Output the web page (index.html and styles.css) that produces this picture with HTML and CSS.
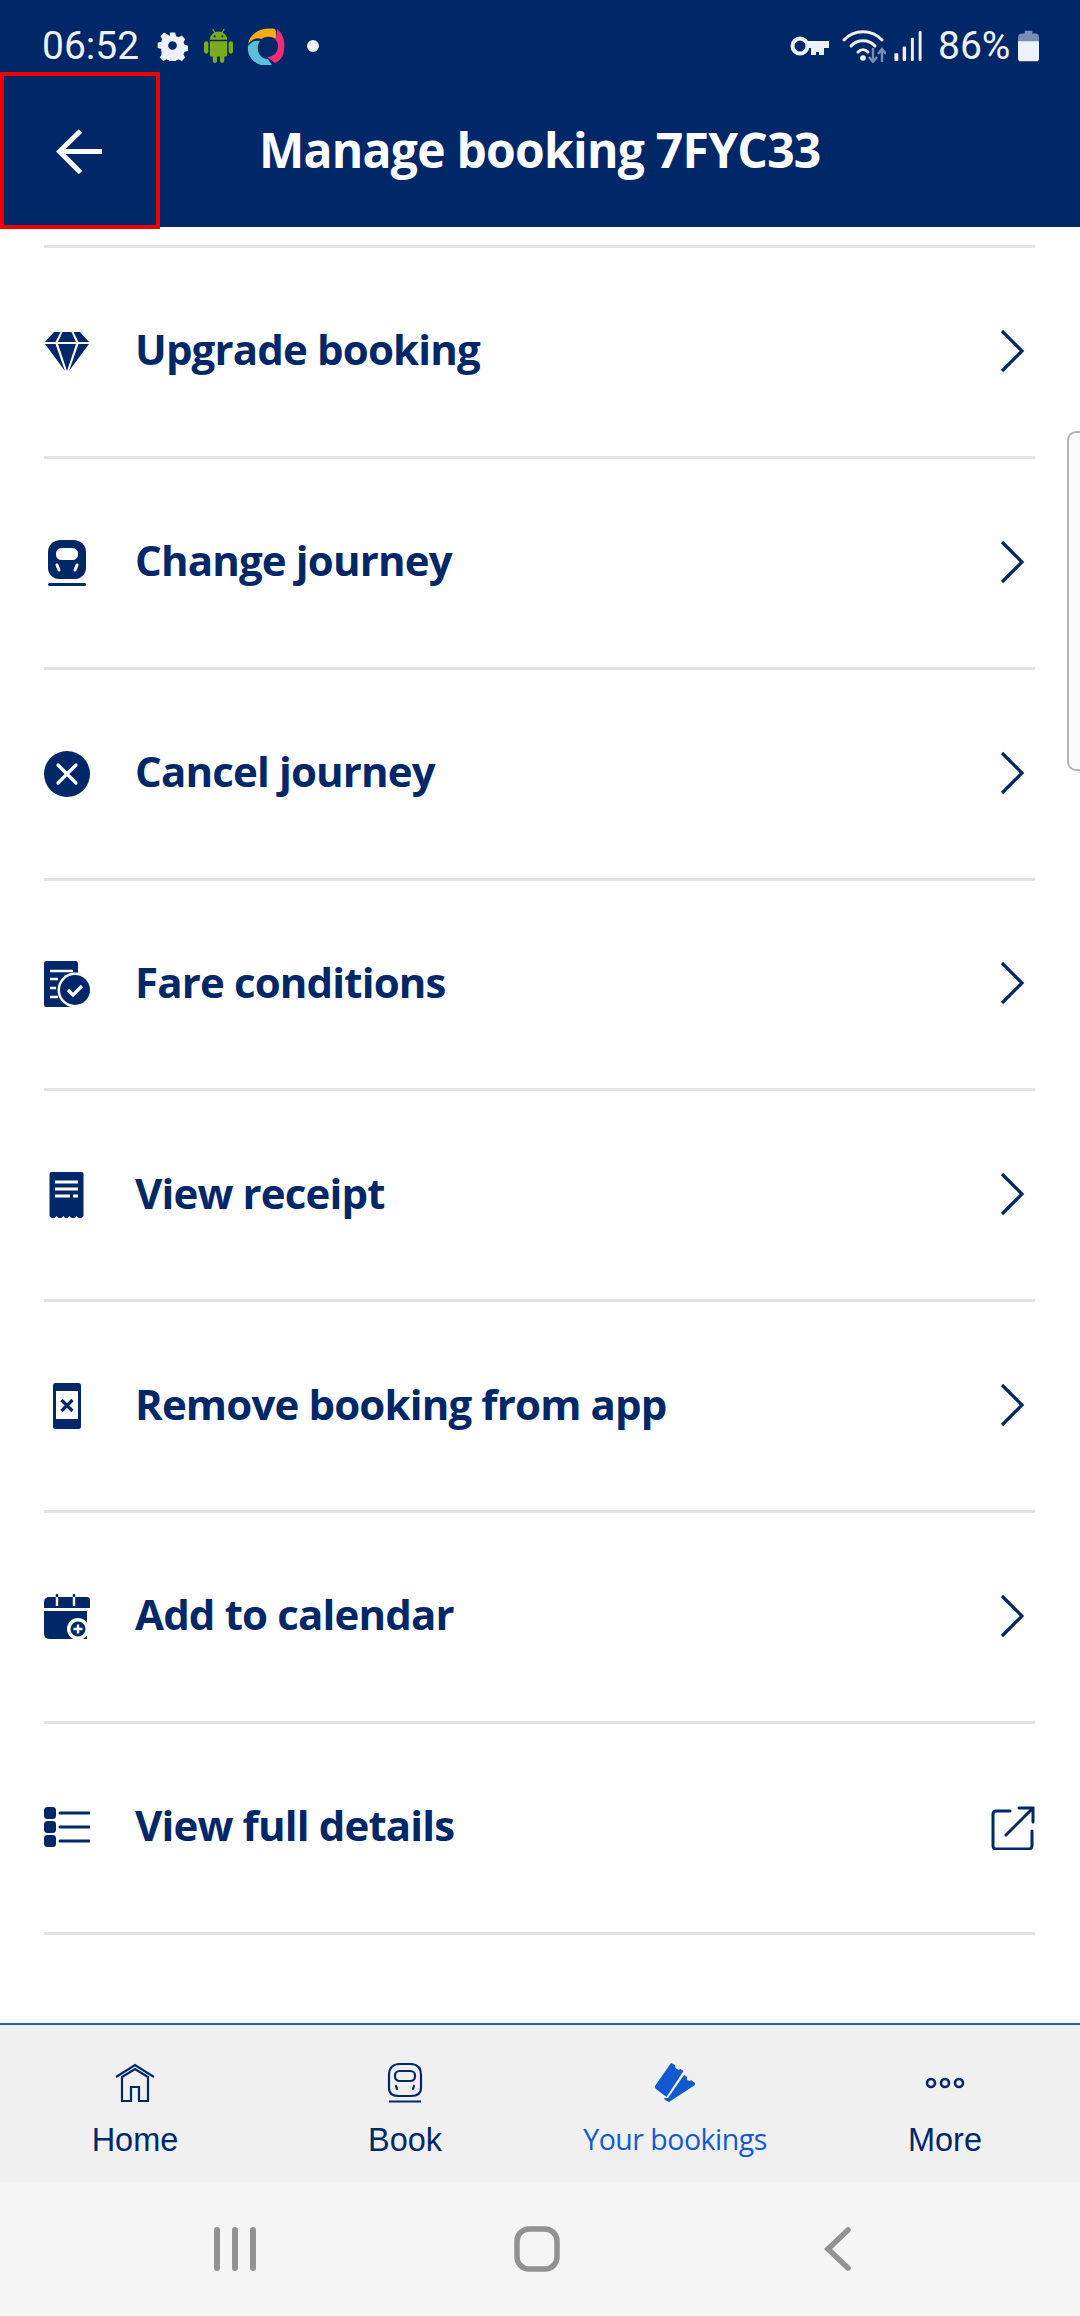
FILE: index.html
```html
<!DOCTYPE html>
<html lang="en">
<head>
<meta charset="utf-8">
<title>Manage booking 7FYC33</title>
<link rel="stylesheet" href="styles.css">
</head>
<body>
<div class="screen">
  <header class="header">
    <div class="status">
      <span class="time">06:52</span>
      <svg class="st-gear" viewBox="0 0 32 32"><path fill="#eef1f7" fill-rule="evenodd" d="M13 1h6l1 4 3 1.400 3.600-2 4 4.300-2 3.500 1.200 3 4 1v6l-4 1-1.200 3 2 3.500-4 4.200-3.600-2-3 1.200-1 4h-6l-1-4-3-1.200-3.600 2-4-4.200 2-3.500L3 19.800l-4-1v-6l4-1 1.200-3-2-3.500 4-4.300 3.600 2L13 5zM16 11a5 5 0 1 0 0 10 5 5 0 0 0 0-10z" transform="translate(1.600 1.600) scale(.9)"/></svg>
      <svg class="st-android" viewBox="0 0 30 36"><g fill="#7cab1f"><path d="M6 12a9 8.500 0 0 1 18 0z"/><path d="M6 13.500h18v14a2 2 0 0 1-2 2H8a2 2 0 0 1-2-2z"/><rect x="0" y="13.500" width="4.500" height="13" rx="2.200"/><rect x="25.500" y="13.500" width="4.500" height="13" rx="2.200"/><rect x="9" y="27" width="4.500" height="9" rx="2.200"/><rect x="16.500" y="27" width="4.500" height="9" rx="2.200"/></g><path d="M9 1l2.500 4M21 1l-2.500 4" stroke="#7cab1f" stroke-width="1.200"/><circle cx="11" cy="8.500" r="1.100" fill="#002868"/><circle cx="19" cy="8.500" r="1.100" fill="#002868"/></svg>
      <svg class="st-wheel" viewBox="0 0 38 38"><path fill="#f9ab19" d="M1 17C3 6 14 0 28 2c1.500 3 1.500 8 .5 10-4-3-10-3-14 0C10 10 5 12 1 17z"/><path fill="#ef2f72" d="M30 2c7 5 9 15 6 26-2 4-5 7-8 8l-8-6c6 0 11-4 11-11 0-3-1-5-3-7 2-3 2-7 2-10z"/><path fill="#5cbfd8" d="M1 19c3-4 7-6 12-5-3 4-3 10 0 14 2 3 5 4 8 4l4 6H14C5 35 0 28 1 19z"/></svg>
      <span class="st-dot"></span>
      <span class="status-gap"></span>
      <svg class="st-key" viewBox="0 0 39 24"><circle cx="10" cy="12" r="7.500" fill="none" stroke="#eef1f7" stroke-width="4"/><path fill="#eef1f7" d="M17 7h22v7h-5v7h-5v-3h-3v3h-5v-7h-4z"/></svg>
      <svg class="st-wifi" viewBox="0 0 44 34"><g fill="none" stroke="#eef1f7" stroke-width="3" stroke-linecap="round"><path d="M2 11c10-11 28-11 38 0"/><path d="M9 17c6-7 18-7 24 0"/></g><path d="M16 23c3-3 7-3 10 0" fill="none" stroke="#eef1f7" stroke-width="3" stroke-linecap="round"/><circle cx="21" cy="29" r="2.800" fill="#eef1f7"/><path d="M31 19v13M27 28l4 5 4-5M40 33V20M36 25l4-5 4 5" fill="none" stroke="#7a8db3" stroke-width="2.400"/></svg>
      <svg class="st-signal" viewBox="0 0 29 32"><g fill="#eef1f7"><rect x="0" y="24" width="4" height="8" rx="1"/><rect x="8.500" y="17" width="3.500" height="15" rx="1"/><rect x="17" y="8" width="3" height="24" rx="1"/><rect x="25" y="1" width="3" height="31" rx="1"/></g></svg>
      <span class="pct">86%</span>
      <svg class="st-batt" viewBox="0 0 22 32"><path fill="#7a8db3" d="M7 0h8v3h3a4 4 0 0 1 4 4v5H0V7a4 4 0 0 1 4-4h3z"/><path fill="#eef1f7" d="M0 11h22v18a3 3 0 0 1-3 3H3a3 3 0 0 1-3-3z"/></svg>
    </div>
    <div class="toolbar">
      <svg class="back" viewBox="0 0 46 46"><path d="M46 22.500H5M24.500 2 3.500 22.500l21 21" fill="none" stroke="#fff" stroke-width="5"/></svg>
      <h1 class="title">Manage booking 7FYC33</h1>
    </div>
    <div class="focus-box"></div>
  </header>

  <main class="list">
    <a class="row">
      <svg class="icon" viewBox="0 0 46 46"><g fill="#002868"><path d="M10 3h6.500l-5 10H1z"/><path d="M18.500 3h9l4.500 10H14z"/><path d="M29.500 3H36l9 10H34.500z"/><path d="M1 15h10.500L21 42z"/><path d="M14 15h18l-9 27z"/><path d="M34.500 15H45L25 42z"/></g></svg>
      <span class="label">Upgrade booking</span>
      <svg class="chev" viewBox="0 0 26 44"><path d="M2 2l20 20L2 42" fill="none" stroke="#002868" stroke-width="3.200"/></svg>
    </a>
    <a class="row">
      <svg class="icon" viewBox="0 0 46 46"><path fill="#002868" d="M17 0h12c8 0 13 5 13 12v16c0 6-5 11-11 11H15C9 39 4 34 4 28V12C4 5 9 0 17 0z"/><rect x="12" y="8" width="22" height="12" rx="5.500" fill="#fff"/><path d="M13 25l2 5M33 25l-2 5" stroke="#fff" stroke-width="3" stroke-linecap="round"/><rect x="4" y="43" width="38" height="3" rx="1.500" fill="#002868"/></svg>
      <span class="label">Change journey</span>
      <svg class="chev" viewBox="0 0 26 44"><path d="M2 2l20 20L2 42" fill="none" stroke="#002868" stroke-width="3.200"/></svg>
    </a>
    <a class="row">
      <svg class="icon" viewBox="0 0 46 46"><circle cx="23" cy="23" r="23" fill="#002868"/><path d="M14 14l18 18M32 14 14 32" stroke="#fff" stroke-width="3.200" stroke-linecap="round"/></svg>
      <span class="label">Cancel journey</span>
      <svg class="chev" viewBox="0 0 26 44"><path d="M2 2l20 20L2 42" fill="none" stroke="#002868" stroke-width="3.200"/></svg>
    </a>
    <a class="row">
      <svg class="icon" viewBox="0 0 46 46"><rect x="0" y="0" width="34" height="46" rx="2.500" fill="#002868"/><path d="M6 10h23M6 18h8M6 27h6M6 36h8" stroke="#fff" stroke-width="2.600"/><circle cx="31" cy="29" r="17.500" fill="#fff"/><circle cx="31" cy="29" r="15" fill="#002868"/><path d="M24 29l5 5 9-9" fill="none" stroke="#fff" stroke-width="3.200"/></svg>
      <span class="label">Fare conditions</span>
      <svg class="chev" viewBox="0 0 26 44"><path d="M2 2l20 20L2 42" fill="none" stroke="#002868" stroke-width="3.200"/></svg>
    </a>
    <a class="row">
      <svg class="icon" viewBox="0 0 46 46"><path fill="#002868" d="M8 0h30a2 2 0 0 1 2 2v42c-2 3-5 3-7 0-2 3-5 3-7 0-2 3-4 3-6 0-2 3-5 3-7 0-2 3-5 3-7 0V2a2 2 0 0 1 2-2z" transform="translate(-.500 0)"/><path d="M11 10h23M11 17h23M11 24h15M29 24h5" stroke="#fff" stroke-width="2.800"/></svg>
      <span class="label">View receipt</span>
      <svg class="chev" viewBox="0 0 26 44"><path d="M2 2l20 20L2 42" fill="none" stroke="#002868" stroke-width="3.200"/></svg>
    </a>
    <a class="row">
      <svg class="icon" viewBox="0 0 46 46"><rect x="9" y="0" width="28" height="46" rx="2.500" fill="#002868"/><rect x="12" y="8" width="22" height="28" fill="#fff"/><path d="M17.500 17l11 11M28.500 17l-11 11" stroke="#002868" stroke-width="3.200"/></svg>
      <span class="label">Remove booking from app</span>
      <svg class="chev" viewBox="0 0 26 44"><path d="M2 2l20 20L2 42" fill="none" stroke="#002868" stroke-width="3.200"/></svg>
    </a>
    <a class="row">
      <svg class="icon" viewBox="0 0 46 46"><path fill="#002868" d="M5 3h38a3 3 0 0 1 3 3v8H0V8a5 5 0 0 1 5-5z"/><path fill="#002868" d="M0 17h43v28H5a5 5 0 0 1-5-5z"/><path d="M13 3v9M30 3v9" stroke="#fff" stroke-width="2.400"/><path d="M13 0v3M30 0v3" stroke="#002868" stroke-width="2.400"/><circle cx="34" cy="35" r="11" fill="#fff"/><circle cx="34" cy="35" r="7.500" fill="#002868"/><path d="M29.500 35h9M34 30.500v9" stroke="#fff" stroke-width="2.400"/></svg>
      <span class="label">Add to calendar</span>
      <svg class="chev" viewBox="0 0 26 44"><path d="M2 2l20 20L2 42" fill="none" stroke="#002868" stroke-width="3.200"/></svg>
    </a>
    <a class="row">
      <svg class="icon" viewBox="0 0 46 46"><g fill="#002868"><rect x="0" y="2" width="12" height="12" rx="3.500"/><rect x="0" y="16" width="12" height="12" rx="3.500"/><rect x="0" y="30" width="12" height="12" rx="3.500"/></g><path d="M16 8h29M16 22h29M16 36h29" stroke="#002868" stroke-width="3" stroke-linecap="round"/></svg>
      <span class="label">View full details</span>
      <svg class="ext" viewBox="0 0 44 44"><path d="M19 5H5a3 3 0 0 0-3 3v32a3 3 0 0 0 3 3h33a3 3 0 0 0 3-3V25" fill="none" stroke="#002868" stroke-width="3" stroke-linecap="round"/><path d="M15 29 42 2M28 2h14v14" fill="none" stroke="#002868" stroke-width="3" stroke-linecap="round"/></svg>
    </a>
  </main>

  <nav class="tabs">
    <a class="tab">
      <svg class="tab-icon" viewBox="0 0 40 40"><path d="M1 14 20 2l19 12M7 13v25h9V24h8v14h9V13" fill="none" stroke="#002868" stroke-width="2.200"/><path d="M7 14 20 6l13 8" fill="none" stroke="#002868" stroke-width="2.200"/></svg>
      <span class="tab-label">Home</span>
    </a>
    <a class="tab">
      <svg class="tab-icon" viewBox="0 0 40 40"><path d="M15 1h10c7 0 11 4 11 11v13c0 6-4 8-10 8H14c-6 0-10-2-10-8V12C4 5 8 1 15 1z" fill="none" stroke="#002868" stroke-width="2.200"/><rect x="10" y="8" width="20" height="10" rx="4.500" fill="none" stroke="#002868" stroke-width="2.200"/><path d="M11 23l1 3M29 23l-1 3" stroke="#002868" stroke-width="2.200" stroke-linecap="round"/><path d="M4 38.500h32" stroke="#002868" stroke-width="2"/></svg>
      <span class="tab-label">Book</span>
    </a>
    <a class="tab tab-on">
      <svg class="tab-icon" viewBox="0 0 40 40"><path fill="#1259d1" d="M16 0l4 2 .5 3 3 2 2-1 3 2-17 26L1 26a3 3 0 0 1-1-3z"/><path fill="#1259d1" d="M29 12l3 2 0 3 3 1 1-1 4 3a2 2 0 0 1 0 2L14 39l-4-2-1-2 4 0z"/></svg>
      <span class="tab-label alt">Your bookings</span>
    </a>
    <a class="tab">
      <svg class="tab-icon" viewBox="0 0 40 40"><g fill="none" stroke="#002868" stroke-width="2.600"><circle cx="6" cy="20" r="4"/><circle cx="20" cy="20" r="4"/><circle cx="34" cy="20" r="4"/></g></svg>
      <span class="tab-label">More</span>
    </a>
  </nav>

  <div class="sysnav">
    <svg class="sys-recent" viewBox="0 0 42 44"><g fill="#929292"><rect x="0" y="0" width="6" height="44" rx="3"/><rect x="18" y="0" width="6" height="44" rx="3"/><rect x="36" y="0" width="6" height="44" rx="3"/></g></svg>
    <svg class="sys-home" viewBox="0 0 46 46"><rect x="3" y="3" width="40" height="40" rx="12" fill="none" stroke="#929292" stroke-width="5.500"/></svg>
    <svg class="sys-back" viewBox="0 0 28 44"><path d="M24 3 4 22l20 19" fill="none" stroke="#929292" stroke-width="5.500" stroke-linecap="round"/></svg>
  </div>

  <div class="scrollbar"></div>
</div>
</body>
</html>
```

FILE: styles.css
```css
* { box-sizing: border-box; }
html, body { margin: 0; padding: 0; }
body { background: #fff; font-family: "Open Sans", sans-serif; color: #002868; }

.screen {
  position: relative;
  width: 1080px;
  height: 2316px;
  display: flex;
  flex-direction: column;
  overflow: hidden;
  background: #fff;
}

.header { position: relative; background: #002868; height: 227px; flex: none; color: #fff; }

.status {
  height: 73px;
  padding: 18px 41px 0 42px;
  display: flex;
  align-items: center;
  color: #eef1f7;
}
.time { font: 400 39px "Roboto", sans-serif; width: 98px; }
.pct { font: 400 39px "Roboto", sans-serif; width: 72px; margin-left: 15px; }
.status-gap { flex: 1; }
.st-gear { width: 31px; height: 31px; margin-left: 17px; }
.st-android { width: 29px; height: 35px; margin-left: 16px; }
.st-wheel { width: 38px; height: 38px; margin-left: 14px; }
.st-dot { width: 12px; height: 12px; border-radius: 50%; background: #eef1f7; margin-left: 22px; }
.st-key { width: 39px; height: 24px; }
.st-wifi { width: 44px; height: 34px; margin-left: 13px; }
.st-signal { width: 29px; height: 31px; margin-left: 8px; }
.st-batt { width: 21px; height: 32px; margin-left: 8px; }

.toolbar { height: 154px; display: flex; align-items: center; padding-left: 56px; }
.back { width: 46px; height: 46px; margin-top: 4px; }
.title { margin: 0 0 2px 157px; font: 700 48px "Open Sans", sans-serif; letter-spacing: -0.75px; color: #fff; white-space: nowrap; }

.focus-box {
  position: absolute;
  left: 0;
  top: 72px;
  width: 160px;
  height: 157px;
  border: 4px solid #ee0000;
}

.list { flex: 1; padding: 18px 45px 0 44px; min-height: 0; }
.row {
  height: 210.85px;
  display: flex;
  align-items: center;
  border-top: 3px solid #e3e3e3;
}
.row:last-child { height: 213.85px; border-bottom: 3px solid #e3e3e3; }
.icon { width: 46px; height: 46px; flex: none; }
.label { flex: 1; margin: 0 0 6px 45px; font: 700 42px "Open Sans", sans-serif; letter-spacing: -0.85px; color: #002868; white-space: nowrap; }
.chev { width: 26px; height: 44px; margin: 0 9px 2px 0; flex: none; }
.ext { width: 44px; height: 44px; flex: none; }

.tabs {
  height: 159px;
  flex: none;
  display: grid;
  grid-template-columns: repeat(4, 270px);
  background: #f0f0f0;
  border-top: 2px solid #2a62ad;
}
.tab { display: flex; flex-direction: column; align-items: center; padding-top: 38px; }
.tab-icon { width: 40px; height: 40px; }
.tab-label { margin-top: 19px; font: 400 32.5px "Liberation Sans", sans-serif; color: #002868; }
.tab-on .tab-label { color: #1259d1; }
.tab-label.alt { font: 400 28.5px "Open Sans", sans-serif; letter-spacing: -0.5px; margin-top: 17px; }

.sysnav {
  height: 134px;
  flex: none;
  background: #f5f5f5;
  display: grid;
  grid-template-columns: 214px 42px 258px 46px 264px 28px;
  align-items: center;
}
.sys-recent { grid-column: 2; width: 42px; height: 44px; }
.sys-home { grid-column: 4; width: 46px; height: 46px; }
.sys-back { grid-column: 6; width: 28px; height: 44px; }

.scrollbar {
  position: absolute;
  right: 0;
  top: 431px;
  width: 13px;
  height: 340px;
  border: 2px solid #b5b5b5;
  border-right: 0;
  border-radius: 9px 0 0 9px;
  background: #fafafa;
}
```
